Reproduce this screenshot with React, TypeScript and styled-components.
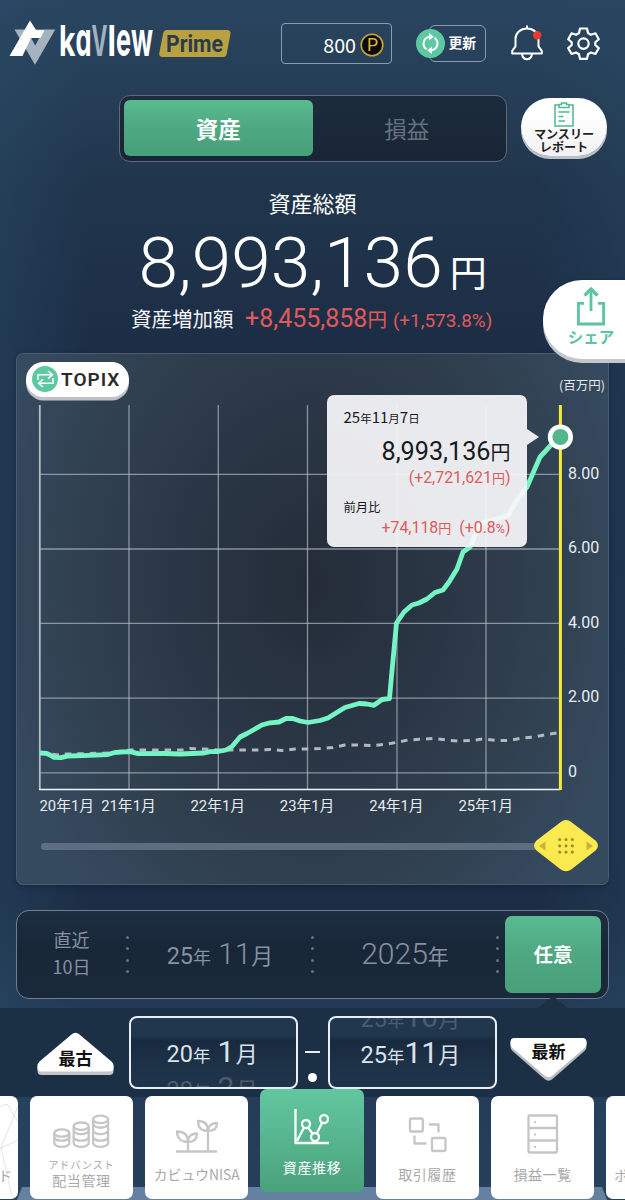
import React from "react";
import styled, { createGlobalStyle, css } from "styled-components";

const jp = `"Noto Sans CJK JP", "Noto Sans", sans-serif`;
const num = `Roboto, "Noto Sans CJK JP", sans-serif`;

const GlobalStyle = createGlobalStyle`
  * { box-sizing: border-box; }
  body { margin: 0; background: #20354c; }
`;

const Screen = styled.div`
  position: relative;
  display: flex;
  flex-direction: column;
  width: 625px;
  height: 1200px;
  overflow: hidden;
  color: #fff;
  font-family: ${jp};
  line-height: 1;
  background:
    linear-gradient(90deg, rgba(42, 76, 104, 0.42) 0, rgba(42, 76, 104, 0) 90px, rgba(42, 76, 104, 0) 535px, rgba(42, 76, 104, 0.3) 625px),
    linear-gradient(180deg, #2a4560 0, #263f58 80px, #20354c 190px, #1c2e46 345px, #1a2b44 600px, #1b2d45 900px, #233a55 1008px, #263f5a 1200px);
`;

const Glyph = styled.span<{ $size: number; $weight?: number; $roman?: boolean; $gap?: number }>`
  font-family: ${(p) => (p.$roman ? num : jp)};
  font-size: ${(p) => p.$size}px;
  font-weight: ${(p) => p.$weight ?? 400};
  margin-left: ${(p) => p.$gap ?? 0}px;
  line-height: 1;
  white-space: pre;
`;

/* ---------- header ---------- */

const Header = styled.header`
  display: flex;
  align-items: center;
  height: 86px;
  padding-left: 9px;
  flex: none;
`;

const PointsBox = styled.div`
  display: flex;
  align-items: center;
  justify-content: flex-end;
  width: 111px;
  height: 41px;
  margin-left: 50px;
  padding: 3px 7px 0 0;
  gap: 4px;
  border: 1.5px solid #8c9aaf;
  border-radius: 4px;
  font-size: 19.7px;
`;

const UpdateButton = styled.div`
  display: flex;
  align-items: center;
  width: 70px;
  height: 37px;
  margin-left: 24px;
`;

const UpdateFrame = styled.div`
  display: flex;
  align-items: center;
  justify-content: flex-end;
  width: 57px;
  height: 37px;
  margin-left: -16px;
  padding: 0 9px 1px 0;
  border: 1.5px solid #8c9aaf;
  border-radius: 6px;
  font-size: 13.8px;
  font-weight: 700;
`;

const UpdateIcon = styled.svg`
  position: relative;
  flex: none;
`;

const HeaderIcon = styled.svg<{ $gap: number }>`
  margin-left: ${(p) => p.$gap}px;
  flex: none;
`;

/* ---------- asset / profit switch ---------- */

const greenFill = css`
  background: linear-gradient(180deg, #5abb90 0%, #4ea881 48%, #48a07a 100%);
`;

const SwitchRow = styled.div`
  display: flex;
  align-items: flex-start;
  padding-left: 118.5px;
  margin-top: 8.5px;
  height: 67px;
  flex: none;
`;

const Switch = styled.div`
  display: flex;
  width: 388px;
  height: 67px;
  padding: 4.5px;
  border: 1.5px solid #5d6978;
  border-radius: 11px;
  background: linear-gradient(180deg, #1c2c3d, #182536);
`;

const SwitchTab = styled.div<{ $active?: boolean }>`
  flex: 1;
  display: flex;
  align-items: center;
  justify-content: center;
  border-radius: 6px;
  font-size: 22.5px;
  font-weight: ${(p) => (p.$active ? 700 : 400)};
  color: ${(p) => (p.$active ? "#fff" : "#67717d")};
  ${(p) => p.$active && greenFill}
`;

const ReportButton = styled.div`
  display: flex;
  flex-direction: column;
  align-items: center;
  width: 86px;
  height: 58px;
  margin: 3px 0 0 14.5px;
  padding-top: 4px;
  border-radius: 30px;
  background: linear-gradient(180deg, #ffffff 30%, #f1f1f3 100%);
  box-shadow: 0 3px 0 #bcc1c9;
  color: #222;
  font-size: 12.1px;
  font-weight: 700;
  line-height: 13px;
  text-align: center;
`;

/* ---------- summary ---------- */

const Title = styled.h1`
  margin: 29px 0 0;
  height: 22px;
  font-size: 22px;
  font-weight: 400;
  line-height: 22px;
  text-align: center;
  flex: none;
`;

const Amount = styled.div`
  display: flex;
  align-items: baseline;
  height: 72px;
  margin-top: 14px;
  padding-left: 138.5px;
  flex: none;
`;

const Gain = styled.div`
  display: flex;
  align-items: baseline;
  height: 26px;
  margin-top: 7px;
  padding-left: 131px;
  color: #e2595b;
  flex: none;
`;

const GainLabel = styled(Glyph)`
  color: #f2f5f9;
`;

const ShareButton = styled.div`
  position: absolute;
  right: -20px;
  top: 280px;
  z-index: 2;
  display: flex;
  flex-direction: column;
  align-items: center;
  width: 102px;
  height: 79px;
  padding: 6px 6px 0 0;
  gap: 3px;
  border-radius: 39px 0 0 39px;
  background: #fff;
  box-shadow: 0 4px 0 #c3c6cc, 0 0 3px rgba(10, 20, 40, 0.4);
  color: #5cc4a0;
  font-size: 15.5px;
  font-weight: 700;
`;

/* ---------- chart ---------- */

const Panel = styled.section`
  position: relative;
  display: flex;
  flex-direction: column;
  width: 593px;
  height: 532px;
  margin: 21px 0 0 16px;
  border: 1px solid #4a5c6f;
  border-radius: 7px;
  background: radial-gradient(ellipse 330px 430px at 50% 43%, #242c39 0%, #2b3746 42%, #30404f 70%, #364a5f 100%);
  box-shadow: 0 2px 5px rgba(10, 22, 40, 0.35);
  flex: none;
`;

const PanelHead = styled.div`
  display: flex;
  justify-content: space-between;
  height: 48px;
  padding: 8px 3px 0 9px;
  flex: none;
`;

const IndexPill = styled.div`
  display: flex;
  align-items: center;
  width: 103px;
  height: 35px;
  padding: 0 0 0 6px;
  gap: 3px;
  border-radius: 18px;
  background: #fff;
  box-shadow: 0 3.5px 0 #bfc2c8;
  color: #2b2b2b;
  font: 600 19px/1 Roboto, sans-serif;
  letter-spacing: 1px;
`;

const Unit = styled.div`
  padding-top: 17px;
  font-size: 12.5px;
  color: #e3e8ee;
  white-space: nowrap;
`;

const Plot = styled.svg`
  display: block;
  flex: none;
`;

const Tooltip = styled.div`
  position: absolute;
  left: 310px;
  top: 41px;
  display: flex;
  flex-direction: column;
  width: 200px;
  height: 152px;
  padding: 14px 16.5px 0;
  border-radius: 7px;
  background: rgba(247, 248, 250, 0.93);
  color: #17191c;
  &::after {
    content: "";
    position: absolute;
    left: 200px;
    top: 34px;
    border: 8px solid transparent;
    border-left: 12px solid rgba(247, 248, 250, 0.93);
    border-right: 0;
  }
`;

const TipLine = styled.div<{ $h: number; $right?: boolean; $red?: boolean }>`
  display: flex;
  align-items: baseline;
  justify-content: ${(p) => (p.$right ? "flex-end" : "flex-start")};
  height: ${(p) => p.$h}px;
  color: ${(p) => (p.$red ? "#e2595b" : "inherit")};
`;

const Slider = styled.div`
  display: flex;
  align-items: center;
  height: 57px;
  padding-left: 24px;
`;

const Track = styled.div`
  width: 500px;
  height: 7px;
  border-radius: 4px 0 0 4px;
  background: #5e6e80;
`;

const Thumb = styled.svg`
  margin-left: -8px;
  flex: none;
`;

/* ---------- period selector ---------- */

const PeriodBar = styled.div`
  display: flex;
  align-items: center;
  width: 593px;
  height: 89px;
  margin: 25px 0 0 16px;
  padding: 0 7px 0 0;
  border: 1.5px solid #727e8d;
  border-radius: 13px;
  background: linear-gradient(180deg, #1d2e42, #182737 45%, #1a2a3c);
  color: #8690a0;
  flex: none;
`;

const Period = styled.div`
  display: flex;
  align-items: baseline;
  justify-content: center;
  width: 182px;
`;

const RecentPeriod = styled.div`
  width: 109px;
  padding-bottom: 3px;
  font-size: 18px;
  line-height: 26.5px;
  text-align: center;
`;

const Divider = styled.div`
  width: 3px;
  height: 3px;
  margin-top: -34px;
  border-radius: 50%;
  background: #66717f;
  box-shadow: 0 11px 0 #66717f, 0 23px 0 #66717f, 0 34px 0 #66717f;
  flex: none;
`;

const CustomPeriod = styled.div`
  display: flex;
  align-items: center;
  justify-content: center;
  width: 96px;
  height: 77px;
  margin-left: auto;
  border-radius: 7px;
  font-size: 19.5px;
  font-weight: 700;
  color: #fff;
  ${greenFill}
`;

/* ---------- range picker ---------- */

const RangePanel = styled.div`
  position: relative;
  display: flex;
  align-items: flex-start;
  height: 89px;
  margin-top: 9px;
  padding: 8.5px 0 0 37px;
  background: #1b3045;
  flex: none;
  &::before {
    content: "";
    position: absolute;
    left: 537px;
    top: -12px;
    border: 16px solid transparent;
    border-top: 0;
    border-bottom: 13px solid #1b3045;
  }
`;

const EndButton = styled.svg<{ $top: number; $left?: number }>`
  margin: ${(p) => p.$top}px 0 0 ${(p) => p.$left ?? 0}px;
  flex: none;
`;

const Wheel = styled.div<{ $left: number; $inset: number; $offset: number }>`
  width: 169px;
  height: 73px;
  margin-left: ${(p) => p.$left}px;
  padding-left: ${(p) => p.$inset}px;
  border: 2px solid #e9eef4;
  border-radius: 8px;
  background: linear-gradient(180deg, #22384f 0%, #20364c 25%, #182a3e 34%, #1c3046 60%, #20354b 100%);
  overflow: hidden;
  flex: none;
  &::before {
    content: "";
    display: block;
    margin-top: ${(p) => p.$offset}px;
  }
`;

const WheelItem = styled.div<{ $dim?: boolean }>`
  display: flex;
  align-items: baseline;
  height: 36px;
  color: ${(p) => (p.$dim ? "#4a5c71" : "#dbe2ec")};
`;

const RangeDash = styled.div`
  display: flex;
  flex-direction: column;
  align-items: center;
  width: 15px;
  margin: 35px 0 0 7.5px;
  gap: 20px;
  &::before {
    content: "";
    width: 15px;
    height: 2px;
    background: #e9eef4;
  }
  &::after {
    content: "";
    width: 9px;
    height: 9px;
    border-radius: 50%;
    background: #fff;
  }
`;

/* ---------- bottom navigation ---------- */

const Nav = styled.nav`
  position: relative;
  display: flex;
  gap: 12px;
  height: 104px;
  margin: -1px 0 0 -85.5px;
  flex: none;
`;

const Shelf = styled.svg`
  position: absolute;
  left: 0;
  bottom: 0;
`;

const Card = styled.div<{ $active?: boolean; $pad?: number; $tight?: boolean }>`
  position: relative;
  display: flex;
  flex-direction: column;
  align-items: center;
  justify-content: flex-end;
  width: 103.3px;
  height: 103px;
  margin-top: ${(p) => (p.$active ? -7 : 0)}px;
  padding-bottom: ${(p) => p.$pad ?? 17}px;
  border-radius: 7px;
  background: ${(p) => (p.$active ? "linear-gradient(180deg, #62c7a0, #4aa27c)" : "#fff")};
  color: ${(p) => (p.$active ? "#fff" : "#a9a9a9")};
  font-size: ${(p) => (p.$tight ? 13.8 : 14)}px;
  letter-spacing: ${(p) => (p.$tight ? 0 : 0.6)}px;
  white-space: nowrap;
  flex: none;
`;

const CardIcon = styled.svg<{ $weight?: number }>`
  position: absolute;
  left: 0;
  top: 0;
  fill: none;
  stroke: currentColor;
  stroke-width: ${(p) => p.$weight ?? 2.3};
  stroke-linejoin: round;
`;

const GrayIcon = styled(CardIcon)`
  stroke: #c6c6c6;
`;

const SmallLabel = styled.span`
  font-size: 10.3px;
  letter-spacing: 0.7px;
  margin-bottom: 2px;
`;

const EdgeLabel = styled.span<{ $side: "left" | "right" }>`
  align-self: ${(p) => (p.$side === "left" ? "flex-end" : "flex-start")};
  padding: 0 5px 0 8px;
`;

const wordmark = [
  { t: "k", x: 59, w: 16.5, s: 42, c: "#fff" },
  { t: "a", x: 75.5, w: 16, s: 47, c: "#fff" },
  { t: "V", x: 91.5, w: 16, s: 42, c: "#a3b1c0" },
  { t: "I", x: 107.5, w: 8.5, s: 42, c: "#fff" },
  { t: "e", x: 116, w: 15, s: 48, c: "#fff" },
  { t: "w", x: 131, w: 22, s: 47, c: "#fff" },
];

function Logo() {
  return (
    <svg width="222" height="60" viewBox="9 13 222 60">
      <path d="M14.500 29.500H55.300L35 64.800z" fill="#a4b3be" />
      <path d="M30 20.500L36.200 30.200H44.500L40.500 38H31L22.500 56H9.500z" fill="#fff" />
      <path d="M31.200 38h8l-4 7.500z" fill="#2b4560" />
      {wordmark.map((l) => (
        <text
          key={l.t}
          x={l.x}
          y="55.500"
          textLength={l.w}
          lengthAdjust="spacingAndGlyphs"
          fill={l.c}
          fontFamily="Inter, Roboto, sans-serif"
          fontWeight="700"
          fontSize={l.s}
          style={{ fontFeatureSettings: '"cv11"' }}
        >
          {l.t}
        </text>
      ))}
      <path d="M167 30h60.500a3 3 0 0 1 3 3.500l-3.800 20.500a3.500 3.500 0 0 1-3.500 3h-61a3 3 0 0 1-3-3.500l4-20.500a4 4 0 0 1 3.800-3z" fill="#b9a040" />
      <text x="166" y="51.500" textLength="57" lengthAdjust="spacingAndGlyphs" fill="#2a3c49" fontFamily="Roboto, sans-serif" fontWeight="700" fontSize="23.500">
        Prime
      </text>
    </svg>
  );
}

const xLines = [129, 218.3, 307.5, 397, 486];
const yLines = [474.3, 549, 623.3, 698.1, 772.8];
const xLabels = ["20年1月", "21年1月", "22年1月", "23年1月", "24年1月", "25年1月"];
const yLabels = ["8.00", "6.00", "4.00", "2.00", "0"];
const assets =
  "40,753 46,753.3 50,755 54,757.3 61,757.6 68,756 90,755.3 107,754.7 114,752.7 121,752 130,751.7 138,753.7 165,753.5 180,754 204,753 210,751.7 218,751.5 226,750 232,746.5 240,737 247,733.5 262,725 270,722.8 279,722 286,718.5 292,718.3 300,721 308,722.5 320,720.5 328,718 336,713 345,707.5 359,703.5 367,704 374,705.300 382,699.500 389.500,698.500 391.500,676 396.500,623 404,612 412,605 419,603 427,599 435,592.500 443,590 449,582 457,569 463,552 470,547 479,526 484,522 497,519 508.500,515 517,500 527,487 540,457 552,444 560,437";
const topix =
  "40,753 60,755 66,754 90,753.5 110,753 130,750 157,750 165,750 182,750 190,748.5 205,749 220,750 258,750 270,749.5 282,750.5 295,749 308,749 320,748.500 333,747.500 345,745 359,745 372,745.500 384,744.500 396,742.500 408,740 421,739.300 434,738.500 446,740 458,741 471,740.500 483,739 497,740.500 509,740.500 521,738.300 534,737 547,734.500 560,732.500";

function ChartPlot() {
  return (
    <Plot width="590" height="416" viewBox="17 402 590 416">
      <g stroke="#c5ccd4" strokeOpacity="0.62" strokeWidth="1.3">
        {xLines.map((x) => (
          <line key={x} x1={x} x2={x} y1="405" y2="789" />
        ))}
        {yLines.map((y) => (
          <line key={y} x1="40" x2="560" y1={y} y2={y} />
        ))}
      </g>
      <line x1="39.800" x2="39.800" y1="405" y2="790" stroke="#b4bcc6" strokeWidth="1.800" />
      <line x1="39" x2="560" y1="789.500" y2="789.500" stroke="#f2f4f7" strokeWidth="1.500" />
      <polyline points={topix} fill="none" stroke="#b3b9c1" strokeWidth="3" strokeDasharray="6.500 6" />
      <polyline points={assets} fill="none" stroke="#74f5c3" strokeWidth="4.800" strokeLinejoin="round" />
      <line x1="560.400" x2="560.400" y1="405" y2="790" stroke="#f6ea35" strokeWidth="3" />
      <circle cx="560.400" cy="437" r="10.300" fill="#54b68c" stroke="#fff" strokeWidth="4.600" />
      <g fill="#e8ecf1" fontFamily={num} fontSize="14.800">
        {xLabels.map((t, i) => (
          <text key={t} x={i === 0 ? 39.500 : 128.500 + (i - 1) * 89.300} y="810.500" textAnchor={i === 0 ? "start" : "middle"}>
            {t}
          </text>
        ))}
      </g>
      <g fill="#e8ecf1" fontFamily={num} fontSize="16">
        {yLabels.map((t, i) => (
          <text key={t} x="568" y={478.700 + i * 74.500}>
            {t}
          </text>
        ))}
      </g>
    </Plot>
  );
}

function WheelDate({ year, month, dim, joined }: { year: string; month: string; dim?: boolean; joined?: boolean }) {
  return (
    <WheelItem $dim={dim}>
      <Glyph $size={23.5} $roman>{year}</Glyph>
      <Glyph $size={17.5}>年</Glyph>
      <Glyph $size={30} $roman $gap={joined ? 0 : 7}>{month}</Glyph>
      <Glyph $size={22} $gap={joined ? 0 : 1.5}>月</Glyph>
    </WheelItem>
  );
}

export default function App() {
  return (
    <Screen>
      <GlobalStyle />
      <Header>
        <Logo />
        <PointsBox>
          800
          <svg width="24" height="24" viewBox="0 0 24 24">
            <circle cx="12" cy="12" r="10.800" fill="#0b0b0d" stroke="#c2a63c" strokeWidth="1.600" />
            <text x="12.400" y="18.200" textAnchor="middle" fill="#dcb93e" fontFamily="Roboto, sans-serif" fontSize="17.500">P</text>
          </svg>
        </PointsBox>
        <UpdateButton>
          <UpdateIcon width="29" height="29" viewBox="0 0 29 29">
            <circle cx="14.500" cy="14.500" r="14.500" fill="#5cc9a2" />
            <g fill="none" stroke="#fff" strokeWidth="2">
              <path d="M10.500 20.300A7 7 0 0 1 13.500 7.700" />
              <path d="M18.500 8.700A7 7 0 0 1 15.500 21.300" />
            </g>
            <path d="M13 4v7.400l4.800-3.700zM16 17.600v7.400l-4.800-3.700z" fill="#fff" />
          </UpdateIcon>
          <UpdateFrame>更新</UpdateFrame>
        </UpdateButton>
        <HeaderIcon $gap={25} width="32" height="37" viewBox="0 0 32 37">
          <g fill="none" stroke="#fff" strokeWidth="2" strokeLinejoin="round">
            <path d="M16 .5v3M1.200 28.500h29.600v-2.700l-3.300-4.500v-7.500c0-6-5-10.300-11.500-10.300S4.500 7.800 4.500 13.800v7.500l-3.300 4.500z" />
            <path d="M11 29c.5 3.500 2.500 5.200 5 5.200s4.500-1.700 5-5.200" />
          </g>
          <circle cx="26.200" cy="10.300" r="4.200" fill="#f03a2c" />
        </HeaderIcon>
        <HeaderIcon $gap={24} width="33" height="33" viewBox="0 0 33 33" fill="none" stroke="#fff" strokeWidth="2.200" strokeLinejoin="round">
          <path d="M13 1.500h7l1 4.600 2.900 1.700 4.500-1.500 3.400 5.900-3.500 3.100v2.700l3.500 3.100-3.400 5.900-4.500-1.500-2.900 1.700-1 4.600h-7l-1-4.600-2.900-1.700-4.500 1.500-3.400-5.900 3.500-3.100v-2.700l-3.500-3.100 3.400-5.900 4.500 1.500 2.900-1.700z" />
          <circle cx="16.500" cy="16.600" r="5.200" />
        </HeaderIcon>
      </Header>

      <SwitchRow>
        <Switch>
          <SwitchTab $active>資産</SwitchTab>
          <SwitchTab>損益</SwitchTab>
        </Switch>
        <ReportButton>
          <svg width="20" height="25" viewBox="0 0 20 25" fill="none" stroke="#4db893" strokeWidth="1.500">
            <path d="M5 3H1v21h18V3h-4" />
            <path d="M5 5.500V2.500h2.500V1h5v1.500H15v3z" />
            <path d="M4.500 10h11M4.500 14.500h5M4.500 19h6.500" />
          </svg>
          マンスリー
          <br />
          レポート
        </ReportButton>
      </SwitchRow>

      <Title>資産総額</Title>
      <Amount>
        <Glyph $size={71.3} $weight={300} $roman>8,993,136</Glyph>
        <Glyph $size={37} $gap={7}>円</Glyph>
      </Amount>
      <Gain>
        <GainLabel $size={20.5}>資産増加額</GainLabel>
        <Glyph $size={25} $roman $gap={11.5}>+8,455,858</Glyph>
        <Glyph $size={19.5}>円</Glyph>
        <Glyph $size={18.9} $roman $gap={6}>(+1,573.8%)</Glyph>
      </Gain>

      <ShareButton>
        <svg width="28" height="40" viewBox="0 0 28 40" fill="none" stroke="currentColor" strokeWidth="2.800">
          <path d="M7 17.400H1.400V38h25.200V17.400H21M14 25V3.500" />
          <path d="M7.500 9.500L14 3l6.500 6.500" strokeWidth="3.200" />
        </svg>
        シェア
      </ShareButton>

      <Panel>
        <PanelHead>
          <IndexPill>
            <svg width="26" height="26" viewBox="0 0 26 26">
              <circle cx="13" cy="13" r="13" fill="#5cc9a2" />
              <g fill="none" stroke="#fff" strokeWidth="1.500">
                <path d="M6 14V8.800h14M16 5l4.500 3.800-4.500 3.800" />
                <path d="M21 12v5.200H7M11 13.400l-4.500 3.800 4.500 3.800" />
              </g>
            </svg>
            TOPIX
          </IndexPill>
          <Unit>(百万円)</Unit>
        </PanelHead>
        <ChartPlot />
        <Slider>
          <Track />
          <Thumb width="66" height="54" viewBox="0 0 66 54">
            <path d="M27.500 3.200Q33 -1 38.500 3.200L62.500 21.500Q67.500 26.500 62.500 31.500L38.500 50.200Q33 54.500 27.500 50.200L3.500 31.500Q-1.500 26.500 3.500 21.500z" fill="#fbea4f" />
            <path d="M12.500 22.500v9l-6.500-4.500zM53.500 22.500v9l6.500-4.500z" fill="#c5b43d" />
            {[20.5, 26.8, 33.1].map((y) =>
              [26.7, 33, 39.3].map((x) => <circle key={`${x}-${y}`} cx={x} cy={y} r="1.600" fill="#9f8f2c" />)
            )}
          </Thumb>
        </Slider>
        <Tooltip>
          <TipLine $h={30}>
            <Glyph $size={15}>25</Glyph>
            <Glyph $size={11.5}>年</Glyph>
            <Glyph $size={15}>11</Glyph>
            <Glyph $size={11.5}>月</Glyph>
            <Glyph $size={15}>7</Glyph>
            <Glyph $size={11.5}>日</Glyph>
          </TipLine>
          <TipLine $h={31.5} $right>
            <Glyph $size={25.2} $roman>8,993,136</Glyph>
            <Glyph $size={20}>円</Glyph>
          </TipLine>
          <TipLine $h={31} $right $red>
            <Glyph $size={15.9} $roman>(+2,721,621</Glyph>
            <Glyph $size={13}>円</Glyph>
            <Glyph $size={15.9} $roman>)</Glyph>
          </TipLine>
          <TipLine $h={19} >
            <Glyph $size={12.3}>前月比</Glyph>
          </TipLine>
          <TipLine $h={18} $right $red>
            <Glyph $size={15.9} $roman>+74,118</Glyph>
            <Glyph $size={13}>円</Glyph>
            <Glyph $size={15.9} $roman $gap={8}>(+0.8</Glyph>
            <Glyph $size={12.5} $roman>%</Glyph>
            <Glyph $size={15.9} $roman>)</Glyph>
          </TipLine>
        </Tooltip>
      </Panel>

      <PeriodBar>
        <RecentPeriod>
          直近
          <br />
          10日
        </RecentPeriod>
        <Divider />
        <Period>
          <Glyph $size={23.5} $roman>25</Glyph>
          <Glyph $size={18}>年</Glyph>
          <Glyph $size={30} $roman $weight={300} $gap={7}>11</Glyph>
          <Glyph $size={22}>月</Glyph>
        </Period>
        <Divider />
        <Period>
          <Glyph $size={30} $roman $weight={300}>2025</Glyph>
          <Glyph $size={21}>年</Glyph>
        </Period>
        <Divider />
        <CustomPeriod>任意</CustomPeriod>
      </PeriodBar>

      <RangePanel>
        <EndButton $top={16} width="77" height="45" viewBox="0 0 77 45">
          <path d="M35 4q3.500-3 7 0L74.500 31q2 2 2 4v4q0 4-4 4h-68q-4 0-4-4v-4q0-2 2-4z" fill="#c2c5ca" />
          <path d="M34.500 2.500q4-3.500 8 0L74.500 29.500q2 2 2 4v2.500q0 3.500-4 3.500h-68q-4 0-4-3.500v-2.500q0-2 2-4z" fill="#fff" />
          <text x="38.500" y="33" textAnchor="middle" fontFamily={jp} fontWeight="700" fontSize="17" fill="#111">最古</text>
        </EndButton>
        <Wheel $left={14.5} $inset={36} $offset={18.5}>
          <WheelDate year="20" month="1" />
          <WheelDate year="20" month="2" dim />
        </Wheel>
        <RangeDash />
        <Wheel $left={7.5} $inset={31} $offset={-16.5}>
          <WheelDate year="25" month="10" dim joined />
          <WheelDate year="25" month="11" joined />
        </Wheel>
        <EndButton $top={21} $left={13} width="77" height="45" viewBox="0 0 77 45">
          <path d="M4.500 2h68q4 0 4 4v4q0 2-2 4L42.500 42q-4 3.500-8 0L2.500 14q-2-2-2-4V6q0-4 4-4z" fill="#b9bdc4" />
          <path d="M4.500 1h68q4 0 4 4v2q0 2-2 4L42.500 38.500q-4 3.500-8 0L2.500 11q-2-2-2-4V5q0-4 4-4z" fill="#fff" />
          <text x="38.500" y="21" textAnchor="middle" fontFamily={jp} fontWeight="700" fontSize="17" fill="#111">最新</text>
        </EndButton>
      </RangePanel>

      <Nav>
        <Shelf width="711" height="13" viewBox="0 0 711 13">
          <path d="M107 0H687l5 13H102z" fill="#64819f" />
        </Shelf>
        <Card>
          <GrayIcon $weight={0.5} width="103" height="103" viewBox="0 0 103 103">
            <path d="M80 12l12-4 11 18M103 10L86 52l17-8M86 52l11 48M60 60l26-8" />
          </GrayIcon>
          <EdgeLabel $side="left">ド</EdgeLabel>
        </Card>
        <Card $pad={12}>
          <GrayIcon width="103" height="103" viewBox="0 0 103 103">
            {[
              { x: 31.8, top: 37, n: 2 },
              { x: 51.2, top: 30.2, n: 3 },
              { x: 70.6, top: 23.4, n: 4 },
            ].map((c) => (
              <g key={c.x}>
                <ellipse cx={c.x} cy={c.top} rx="7.500" ry="3.700" />
                <path d={`M${c.x - 7.5} ${c.top}V47.200a7.500 3.700 0 0 0 15 0V${c.top}`} />
                {Array.from({ length: c.n - 1 }, (_, i) => (
                  <path key={i} d={`M${c.x - 7.5} ${41 - i * 6.6}a7.500 3.700 0 0 0 15 0`} />
                ))}
              </g>
            ))}
          </GrayIcon>
          <SmallLabel>アドバンスト</SmallLabel>
          配当管理
        </Card>
        <Card $tight>
          <GrayIcon width="103" height="103" viewBox="0 0 103 103">
            <path d="M31 55.500h41M43 55V46c-7 0-11-4-11-10.500 7 0 11 3.500 11 10.500 0-5 3-8.500 9-8.500 0 5.500-3 8.500-9 8.500M63 55V35c-6.500 0-10-3.500-10-10 6.500 0 10 3.500 10 10 0-5 3.500-8 9-8 0 5.500-3.500 8-9 8" />
          </GrayIcon>
          カビュウNISA
        </Card>
        <Card $active $pad={17.5}>
          <CardIcon width="103" height="103" viewBox="0 0 103 103">
            <path d="M35.500 20v34H69" />
            <path d="M37 52l7-13.500M48 38.500l4.500 6M57 44l5-10" />
            <circle cx="46" cy="35" r="4" />
            <circle cx="55" cy="48" r="4" />
            <circle cx="64" cy="30" r="4" />
          </CardIcon>
          資産推移
        </Card>
        <Card $pad={17.5}>
          <GrayIcon width="103" height="103" viewBox="0 0 103 103">
            <rect x="34" y="22.500" width="12.800" height="13" rx="1.500" />
            <rect x="56" y="42" width="13.500" height="13" rx="1.500" />
            <path d="M53 28.500h9.500v8M38.500 39.500v8h12" />
          </GrayIcon>
          取引履歴
        </Card>
        <Card $pad={17.5}>
          <GrayIcon width="103" height="103" viewBox="0 0 103 103">
            <rect x="37.500" y="19.500" width="28.500" height="37" rx="1" />
            <path d="M37.500 32h28M37.500 44.500h28" />
            <path d="M43 26h2M43 38.500h2M43 51h2" strokeWidth="1.800" />
          </GrayIcon>
          損益一覧
        </Card>
        <Card>
          <EdgeLabel $side="right">ポ</EdgeLabel>
        </Card>
      </Nav>
    </Screen>
  );
}
